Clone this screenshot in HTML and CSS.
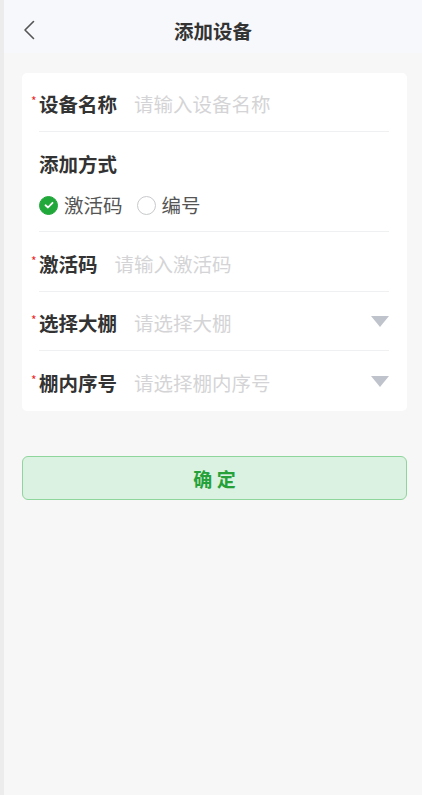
FILE: index.html
```html
<!DOCTYPE html>
<html lang="zh-CN">
<head>
    <meta charset="UTF-8">
    <meta name="viewport" content="width=device-width, initial-scale=1.0">
    <title>添加设备</title>
    <link rel="stylesheet" href="styles.css">
</head>
<body>

    <!-- Header -->
    <div class="header">
        <a class="back" href="#">
            <svg width="12" height="20" viewBox="0 0 12 20">
                <polyline points="10.5,1.5 2,10 10.5,18.5" fill="none" stroke="#555" stroke-width="1.6" stroke-linecap="round" stroke-linejoin="round"/>
            </svg>
        </a>
        <div class="title">添加设备</div>
    </div>

    <div class="page">
        <!-- Form card -->
        <div class="card">
            <div class="row row-a">
                <span class="star">*</span>
                <span class="label">设备名称</span>
                <span class="placeholder">请输入设备名称</span>
            </div>

            <div class="row row-method">
                <div class="label">添加方式</div>
                <div class="radios">
                    <span class="radio checked">
                        <svg width="12" height="12" viewBox="0 0 12 12">
                            <polyline points="2.5,6.3 5,8.5 9.5,3.8" fill="none" stroke="#fff" stroke-width="1.8" stroke-linecap="round" stroke-linejoin="round"/>
                        </svg>
                    </span>
                    <span class="radio-text">激活码</span>
                    <span class="radio"></span>
                    <span class="radio-text">编号</span>
                </div>
            </div>

            <div class="row row-b">
                <span class="star">*</span>
                <span class="label">激活码</span>
                <span class="placeholder">请输入激活码</span>
            </div>

            <div class="row row-a">
                <span class="star">*</span>
                <span class="label">选择大棚</span>
                <span class="placeholder">请选择大棚</span>
                <span class="arrow"></span>
            </div>

            <div class="row row-b last">
                <span class="star">*</span>
                <span class="label">棚内序号</span>
                <span class="placeholder">请选择棚内序号</span>
                <span class="arrow"></span>
            </div>
        </div>

        <button class="submit" type="button">确 定</button>
    </div>

</body>
</html>
```

FILE: styles.css
```css
body {
    margin: 0;
    min-height: 795px;
    background-color: #f7f7f7;
    border-left: 4px solid #ececec;
    font-family: "Noto Sans CJK SC", "Noto Sans", sans-serif;
    color: #333;
}

/* Header */
.header {
    position: relative;
    height: 53px;
    background-color: #f7f8fc;
    display: flex;
    align-items: center;
    justify-content: center;
}

.header .back {
    position: absolute;
    left: 19px;
    top: 20px;
    display: flex;
}

.header .title {
    font-size: 19.5px;
    font-weight: bold;
    color: #333;
    margin-top: 8px;
}

/* Content */
.page {
    padding: 20px 15px 0 18px;
}

.card {
    background-color: white;
    border-radius: 5px;
    padding: 0 18px 0 9px;
}

.row {
    display: flex;
    align-items: center;
    font-size: 19.5px;
    line-height: 26px;
    border-bottom: 1px solid #eff0f2;
    margin-left: 8px;
}

.row-a {
    padding: 18px 0 14px;
}

.row-b {
    padding: 19px 0 14px;
}

.row.last {
    border-bottom: none;
    padding-bottom: 15px;
}

.row .star {
    color: #ee2a2a;
    font-size: 12px;
    line-height: 12px;
    width: 8px;
    margin-left: -8px;
    align-self: flex-start;
    margin-top: 4px;
}

.row .label {
    font-weight: bold;
    color: #333;
    margin-right: 17px;
}

.row .placeholder {
    color: #d4d4d6;
    flex: 1;
}

.row .arrow {
    width: 0;
    height: 0;
    border-left: 9.5px solid transparent;
    border-right: 9.5px solid transparent;
    border-top: 11px solid #bfc3cc;
    margin-top: -3px;
}

/* Add method */
.row-method {
    display: block;
    padding: 19px 0 13px;
}

.radios {
    display: flex;
    align-items: center;
    margin-top: 15px;
}

.radio {
    width: 17px;
    height: 17px;
    border: 1px solid #c8c9cc;
    border-radius: 50%;
    display: flex;
    align-items: center;
    justify-content: center;
    margin-right: 6px;
}

.radio.checked {
    background-color: #21a83a;
    border-color: #21a83a;
}

.radio-text {
    color: #555;
    margin-right: 14px;
}

/* Submit button */
.submit {
    display: block;
    width: 100%;
    height: 44px;
    margin-top: 45px;
    background-color: #dbf1e1;
    border: 1px solid #8fd69d;
    border-radius: 6px;
    color: #26a13a;
    font-family: "Noto Sans CJK SC", "Noto Sans", sans-serif;
    font-size: 19px;
    font-weight: bold;
    cursor: pointer;
}
```
